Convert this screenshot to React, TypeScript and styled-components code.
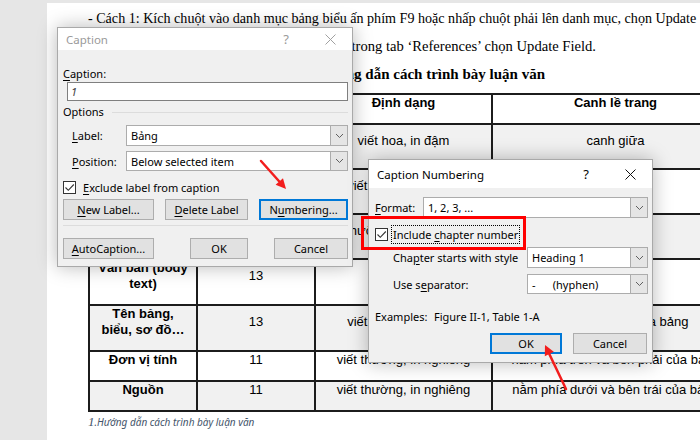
import React from "react";
import styled, { createGlobalStyle } from "styled-components";

const GlobalStyle = createGlobalStyle`
  html, body {
    margin: 0;
    padding: 0;
    background: #e6e6e6;
  }
`;

const Screen = styled.div`
  position: relative;
  width: 700px;
  height: 440px;
  overflow: hidden;
  display: flex;
  background: #e6e6e6;
`;

const Gutter = styled.div`
  flex: none;
  width: 47px;
  background: #e6e6e6;
`;

const Page = styled.div`
  flex: 1;
  margin-top: 3px;
  padding: 1px 0 0 41px;
  background: #fff;
  overflow: hidden;
`;

const DocLine = styled.p<{ $bold?: boolean; $width?: number; $size?: number }>`
  margin: 0;
  width: ${(p) => (p.$width ? `${p.$width}px` : "auto")};
  text-align: ${(p) => (p.$width ? "right" : "left")};
  font-family: "Liberation Serif", "Times New Roman", serif;
  font-size: ${(p) => p.$size ?? 14.1}px;
  font-weight: ${(p) => (p.$bold ? 700 : 400)};
  line-height: 28px;
  white-space: nowrap;
  color: #000;
`;

const DocTable = styled.table`
  margin-top: 5px;
  width: 650px;
  border-collapse: collapse;
  table-layout: fixed;
  font-family: "Liberation Sans", Arial, sans-serif;
  font-size: 13px;
  line-height: 16px;
  color: #000;
`;

const TableRow = styled.tr<{ $shade: boolean; $h: number }>`
  height: ${(p) => p.$h}px;
  background: ${(p) => (p.$shade ? "#f1f1f1" : "#fff")};
`;

const TableCell = styled.td<{ $bold?: boolean; $side: number }>`
  border: 2px solid #1c1c1c;
  padding: 0 ${(p) => p.$side}px 12px;
  text-align: center;
  vertical-align: middle;
  font-weight: ${(p) => (p.$bold ? 700 : 400)};
  overflow: hidden;
  white-space: ${(p) => (p.$side > 4 ? "normal" : "nowrap")};
`;

const TableCaption = styled.div`
  margin-top: 3px;
  font-family: "Noto Sans", sans-serif;
  font-style: italic;
  font-size: 10px;
  line-height: 14px;
  color: #44546a;
`;

const CaptionNumber = styled.span`
  font-family: "Liberation Serif", serif;
  font-size: 13px;
`;

/* dialogs */

const Window = styled.div<{ $left: number; $top: number; $width: number; $height: number }>`
  position: absolute;
  left: ${(p) => p.$left}px;
  top: ${(p) => p.$top}px;
  width: ${(p) => p.$width}px;
  height: ${(p) => p.$height}px;
  box-sizing: border-box;
  display: flex;
  flex-direction: column;
  background: #f0f0f0;
  border: 1px solid #a9a9a9;
  box-shadow: 0 0 18px rgba(0, 0, 0, 0.28);
  font-family: "Noto Sans", "Segoe UI", sans-serif;
  font-size: 11px;
  color: #000;
`;

const TitleBar = styled.div<{ $h: number; $active: boolean }>`
  flex: none;
  height: ${(p) => p.$h}px;
  display: flex;
  align-items: center;
  padding-left: 8px;
  background: #fff;
  color: ${(p) => (p.$active ? "#000" : "#9a9a9a")};
  font-size: 11.5px;
`;

const TitleControls = styled.div`
  margin-left: auto;
  display: flex;
  height: 100%;
`;

const TitleButton = styled.div`
  width: 44px;
  height: 100%;
  display: flex;
  align-items: center;
  justify-content: center;
  font-size: 13px;
`;

const WindowBody = styled.div<{ $top: number; $left: number; $right: number }>`
  flex: 1;
  display: flex;
  flex-direction: column;
  padding: ${(p) => p.$top}px ${(p) => p.$right}px 0 ${(p) => p.$left}px;
`;

const Key = styled.span`
  text-decoration: underline;
  text-underline-offset: 2px;
`;

const FieldLabel = styled.div`
  line-height: 16px;
`;

const TextField = styled.div`
  margin-left: 4px;
  height: 19px;
  box-sizing: border-box;
  display: flex;
  align-items: center;
  padding-left: 3px;
  background: #fff;
  border: 1px solid #7f7f7f;
  font-style: italic;
  color: #444;
`;

const GroupHeader = styled.div`
  margin-top: 3px;
  display: flex;
  align-items: center;
  line-height: 16px;
`;

const GroupRule = styled.div`
  flex: 1;
  height: 1px;
  margin-left: 8px;
  background: #dcdcdc;
`;

const FormRow = styled.div<{ $gap: number; $h: number }>`
  margin-top: ${(p) => p.$gap}px;
  height: ${(p) => p.$h}px;
  display: flex;
  align-items: center;
`;

const RowLabel = styled.div<{ $width: number; $indent?: number }>`
  flex: none;
  width: ${(p) => p.$width}px;
  padding-left: ${(p) => p.$indent ?? 0}px;
  box-sizing: border-box;
`;

const Combo = styled.div`
  flex: 1;
  height: 100%;
  box-sizing: border-box;
  display: flex;
  background: #fff;
  border: 1px solid #acacac;
`;

const ComboValue = styled.div`
  flex: 1;
  display: flex;
  align-items: center;
  padding-left: 4px;
  white-space: pre;
`;

const ComboArrow = styled.div`
  flex: none;
  width: 16px;
  display: flex;
  align-items: center;
  justify-content: center;
  background: #e5e5e5;
  border-left: 1px solid #acacac;
`;

const CheckBox = styled.div`
  flex: none;
  width: 13px;
  height: 13px;
  box-sizing: border-box;
  display: flex;
  align-items: center;
  justify-content: center;
  background: #fff;
  border: 1px solid #333;
`;

const CheckLabel = styled.div<{ $focus?: boolean }>`
  margin-left: ${(p) => (p.$focus ? 3 : 5)}px;
  padding: 1px 1px;
  border: 1px ${(p) => (p.$focus ? "dotted #000" : "solid transparent")};
  line-height: 15px;
`;

const ButtonRow = styled.div<{ $gap: number }>`
  margin-top: ${(p) => p.$gap}px;
  display: flex;
  gap: 11px;
`;

const PushButton = styled.div<{ $width: number; $default?: boolean; $push?: number }>`
  flex: none;
  width: ${(p) => p.$width}px;
  height: 21px;
  box-sizing: border-box;
  margin-left: ${(p) => (p.$push ? `${p.$push}px` : "0")};
  display: flex;
  align-items: center;
  justify-content: center;
  background: #e1e1e1;
  border: ${(p) => (p.$default ? "2px solid #0078d7" : "1px solid #adadad")};
`;

const Divider = styled.div`
  margin-top: 5px;
  height: 1px;
  background: #dcdcdc;
`;

const Examples = styled.div`
  margin-top: 15px;
  display: flex;
  line-height: 16px;
`;

const ExamplesLabel = styled.span`
  width: 59px;
`;

const Markup = styled.svg`
  position: absolute;
  left: 0;
  top: 0;
  pointer-events: none;
`;

const Chevron = () => (
  <svg width="9" height="6" viewBox="0 0 9 6">
    <path d="M1 1 L4.5 4.5 L8 1" fill="none" stroke="#606060" strokeWidth="1" />
  </svg>
);

const CloseGlyph = ({ color }: { color: string }) => (
  <svg width="11" height="11" viewBox="0 0 11 11">
    <path d="M0.5 0.5 L10.5 10.5 M10.5 0.5 L0.5 10.5" stroke={color} strokeWidth="1" />
  </svg>
);

const Tick = () => (
  <svg width="11" height="11" viewBox="0 0 11 11">
    <path d="M1.5 5.5 L4.3 8.3 L9.8 2.5" fill="none" stroke="#333" strokeWidth="1.1" />
  </svg>
);

const Dropdown = ({ children }: { children: React.ReactNode }) => (
  <Combo>
    <ComboValue>{children}</ComboValue>
    <ComboArrow>
      <Chevron />
    </ComboArrow>
  </Combo>
);

const Title = ({ text, h, active }: { text: string; h: number; active: boolean }) => (
  <TitleBar $h={h} $active={active}>
    {text}
    <TitleControls>
      <TitleButton>?</TitleButton>
      <TitleButton>
        <CloseGlyph color={active ? "#111" : "#a0a0a0"} />
      </TitleButton>
    </TitleControls>
  </TitleBar>
);

const rows = [
  { h: 30, head: true, cells: ["Nội dung", "Cỡ chữ", "Định dạng", "Canh lề trang"] },
  { h: 45, cells: ["Tên chương", "14", "viết hoa, in đậm", "canh giữa"] },
  { h: 45, cells: ["Tên mục", "13", "viết thường, in đậm", "canh trái"] },
  { h: 45, cells: ["Tên tiểu mục", "13", "viết thường, in đậm nghiêng", "canh trái"] },
  { h: 46, cells: ["Văn bản (body text)", "13", "viết thường", "canh đều"] },
  { h: 45, cells: ["Tên bảng, biểu, sơ đồ…", "13", "viết thường, in đậm", "nằm phía trên, giữa bảng"] },
  { h: 30, cells: ["Đơn vị tính", "11", "viết thường, in nghiêng", "nằm phía trên và bên phải của bảng"] },
  { h: 29, cells: ["Nguồn", "11", "viết thường, in nghiêng", "nằm phía dưới và bên trái của bảng"] },
];

const CaptionDialog = () => (
  <Window $left={57} $top={27} $width={296} $height={240}>
    <Title text="Caption" h={22} active={false} />
    <WindowBody $top={16} $left={5} $right={4}>
      <FieldLabel>
        <Key>C</Key>aption:
      </FieldLabel>
      <TextField>1</TextField>
      <GroupHeader>
        Options
        <GroupRule />
      </GroupHeader>
      <FormRow $gap={5} $h={21}>
        <RowLabel $width={63} $indent={9}>
          <Key>L</Key>abel:
        </RowLabel>
        <Dropdown>Bảng</Dropdown>
      </FormRow>
      <FormRow $gap={5} $h={20}>
        <RowLabel $width={63} $indent={9}>
          <Key>P</Key>osition:
        </RowLabel>
        <Dropdown>Below selected item</Dropdown>
      </FormRow>
      <FormRow $gap={8} $h={17}>
        <CheckBox>
          <Tick />
        </CheckBox>
        <CheckLabel>
          <Key>E</Key>xclude label from caption
        </CheckLabel>
      </FormRow>
      <ButtonRow $gap={3}>
        <PushButton $width={91}>
          <Key>N</Key>ew Label...
        </PushButton>
        <PushButton $width={83}>
          <Key>D</Key>elete Label
        </PushButton>
        <PushButton $width={89} $default>
          N<Key>u</Key>mbering...
        </PushButton>
      </ButtonRow>
      <Divider />
      <ButtonRow $gap={12}>
        <PushButton $width={91}>
          <Key>A</Key>utoCaption...
        </PushButton>
        <PushButton $width={58} $push={25}>
          OK
        </PushButton>
        <PushButton $width={74} $push={15}>
          Cancel
        </PushButton>
      </ButtonRow>
    </WindowBody>
  </Window>
);

const NumberingDialog = () => (
  <Window $left={368} $top={159} $width={285} $height={204}>
    <Title text="Caption Numbering" h={28} active />
    <WindowBody $top={9} $left={6} $right={4}>
      <FormRow $gap={0} $h={21}>
        <RowLabel $width={48}>
          <Key>F</Key>ormat:
        </RowLabel>
        <Dropdown>1, 2, 3, ...</Dropdown>
      </FormRow>
      <FormRow $gap={6} $h={21}>
        <CheckBox>
          <Tick />
        </CheckBox>
        <CheckLabel $focus>
          Include <Key>c</Key>hapter number
        </CheckLabel>
      </FormRow>
      <FormRow $gap={2} $h={21}>
        <RowLabel $width={152} $indent={18}>
          Cha<Key>p</Key>ter starts with style
        </RowLabel>
        <Dropdown>Heading 1</Dropdown>
      </FormRow>
      <FormRow $gap={6} $h={20}>
        <RowLabel $width={152} $indent={18}>
          Use s<Key>e</Key>parator:
        </RowLabel>
        <Dropdown>{"-      (hyphen)"}</Dropdown>
      </FormRow>
      <Examples>
        <ExamplesLabel>Examples:</ExamplesLabel>
        Figure II-1, Table 1-A
      </Examples>
      <ButtonRow $gap={8}>
        <PushButton $width={72} $default $push={115}>
          OK
        </PushButton>
        <PushButton $width={74}>Cancel</PushButton>
      </ButtonRow>
    </WindowBody>
  </Window>
);

const Annotations = () => (
  <Markup width="700" height="440" viewBox="0 0 700 440">
    <rect x="362.5" y="217.5" width="162" height="31" fill="none" stroke="#ff0000" strokeWidth="3" />
    <line x1="261" y1="161" x2="279.3" y2="181.5" stroke="#f21d1d" strokeWidth="2.5" strokeLinecap="round" />
    <polygon points="286,189 275.6,184.8 283,178.2" fill="#f21d1d" />
    <line x1="566" y1="389" x2="549.3" y2="354" stroke="#f21d1d" strokeWidth="2.5" strokeLinecap="round" />
    <polygon points="545,345 553.8,351.8 544.8,356.2" fill="#f21d1d" />
  </Markup>
);

export default function App() {
  return (
    <>
      <GlobalStyle />
      <Screen>
        <Gutter />
        <Page>
          <DocLine>
            - Cách 1: Kích chuột vào danh mục bảng biểu ấn phím F9 hoặc nhấp chuột phải lên danh mục, chọn Update
          </DocLine>
          <DocLine $width={508} $size={14.6}>
            {"Field. - Cách 2: Bôi đen danh mục rồi\u00a0\u00a0\u00a0trong tab ‘References’ chọn Update Field."}
          </DocLine>
          <DocLine $width={457} $bold $size={15}>
            Bảng 1: Hướng dẫn cách trình bày luận văn
          </DocLine>
          <DocTable>
            <colgroup>
              <col style={{ width: 108 }} />
              <col style={{ width: 118 }} />
              <col style={{ width: 177 }} />
              <col style={{ width: 247 }} />
            </colgroup>
            <tbody>
              {rows.map((r, i) => (
                <TableRow key={i} $h={r.h} $shade={i % 2 === 1}>
                  {r.cells.map((c, j) => (
                    <TableCell key={j} $bold={r.head || j === 0} $side={j === 0 ? 6 : 4}>
                      {c}
                    </TableCell>
                  ))}
                </TableRow>
              ))}
            </tbody>
          </DocTable>
          <TableCaption>
            <CaptionNumber>1</CaptionNumber>.Hướng dẫn cách trình bày luận văn
          </TableCaption>
        </Page>
        <CaptionDialog />
        <NumberingDialog />
        <Annotations />
      </Screen>
    </>
  );
}
